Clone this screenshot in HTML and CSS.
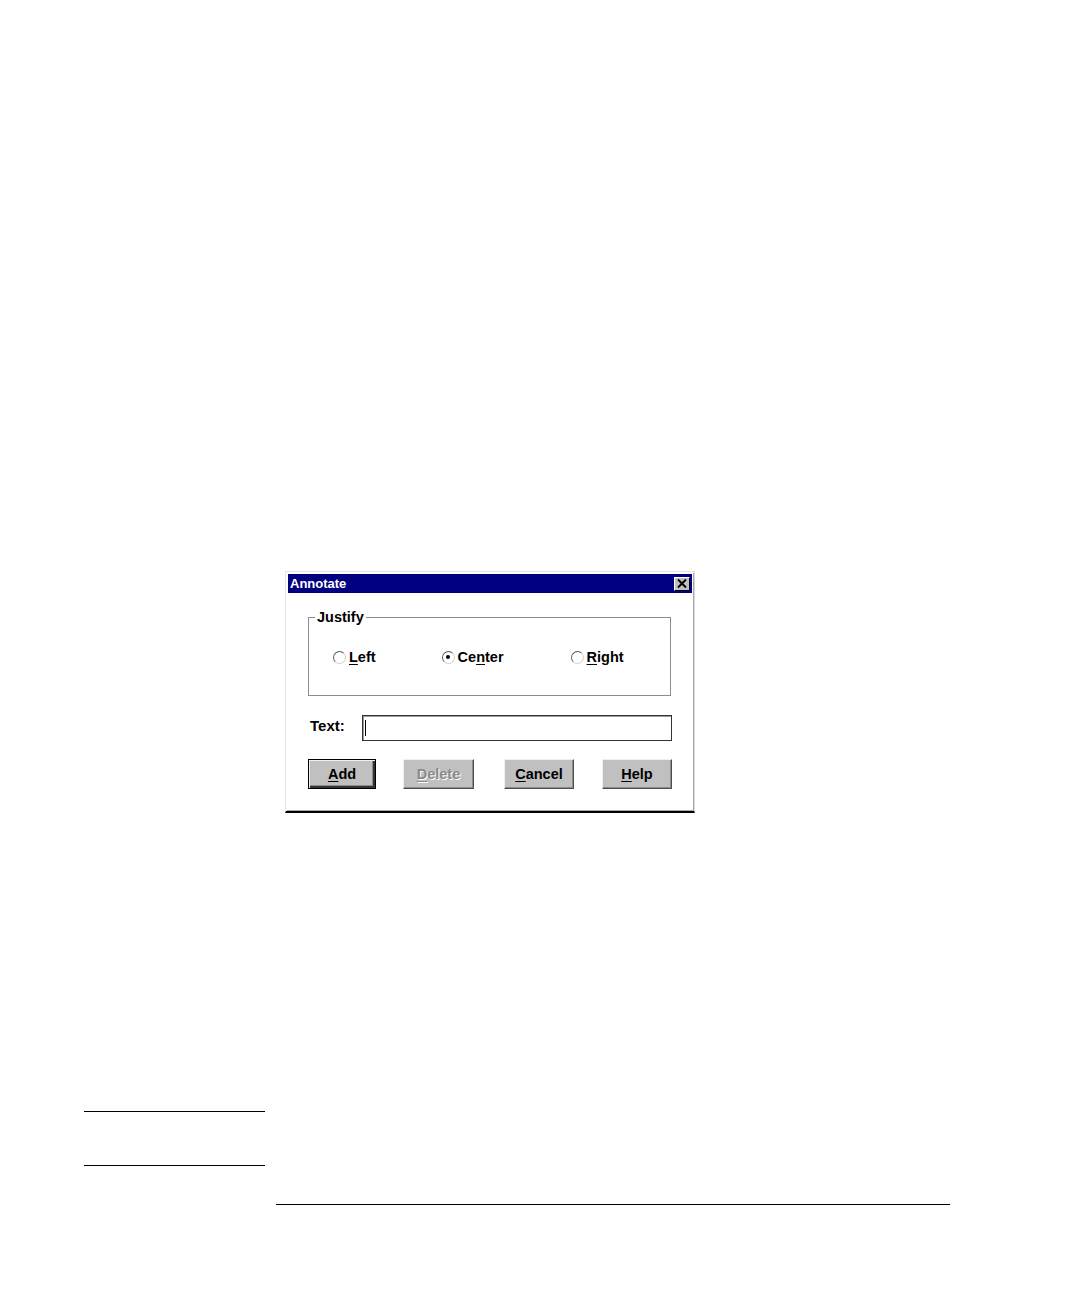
FILE: index.html
```html
<!DOCTYPE html>
<html>
<head>
<meta charset="utf-8">
<link rel="stylesheet" href="styles.css">
</head>
<body>
<div class="page">
  <div class="dialog">
    <div class="titlebar">
      <span class="title">Annotate</span>
      <span class="close">
        <svg width="10" height="9" viewBox="0 0 10 9"><path d="M1 0.5 L9 8.5 M9 0.5 L1 8.5" stroke="#000" stroke-width="2"/></svg>
      </span>
    </div>
    <div class="body">
      <div class="group">
        <span class="legend">Justify</span>
        <div class="radios">
          <label class="radio r-left"><span class="dot"></span><span><u>L</u>eft</span></label>
          <label class="radio r-center"><span class="dot checked"></span><span>Ce<u>n</u>ter</span></label>
          <label class="radio r-right"><span class="dot"></span><span><u>R</u>ight</span></label>
        </div>
      </div>
      <div class="textrow">
        <span class="textlabel">Text:</span>
        <div class="input"><span class="caret"></span></div>
      </div>
      <div class="buttons">
        <div class="btn default b-add"><span><u>A</u>dd</span></div>
        <div class="btn disabled b-delete"><span><u>D</u>elete</span></div>
        <div class="btn b-cancel"><span><u>C</u>ancel</span></div>
        <div class="btn b-help"><span><u>H</u>elp</span></div>
      </div>
    </div>
  </div>
  <div class="rule short first"></div>
  <div class="rule short second"></div>
  <div class="rule long"></div>
</div>
</body>
</html>
```
FILE: styles.css
```css
html, body {
  margin: 0;
  padding: 0;
  background: #fff;
}
.page {
  width: 1080px;
  height: 1298px;
  padding-top: 571px;
  box-sizing: border-box;
  font-family: "Liberation Sans", Arial, sans-serif;
  color: #000;
}
.dialog {
  margin-left: 285px;
  width: 410px;
  height: 242px;
  box-sizing: border-box;
  background: #fff;
  border-top: 1px solid #e4e4e4;
  border-left: 1px solid #e4e4e4;
  border-right: 1px solid #d8d8d8;
  border-bottom: 2px solid #000;
  box-shadow: inset 1px 1px 0 #fff, inset -1px -1px 0 #a8a8a8;
  padding: 2px 2px 0 2px;
}
.titlebar {
  height: 19px;
  background: #000080;
  display: flex;
  align-items: center;
  justify-content: space-between;
  padding: 0 2px 0 2px;
}
.title {
  color: #fff;
  font-weight: bold;
  font-size: 13px;
  line-height: 19px;
}
.close {
  width: 16px;
  height: 14px;
  box-sizing: border-box;
  background: #c0c0c0;
  border-top: 1px solid #fff;
  border-left: 1px solid #fff;
  border-right: 1px solid #000;
  border-bottom: 1px solid #000;
  display: flex;
  align-items: center;
  justify-content: center;
}
.body {
  padding: 24px 0 0 20px;
}
.group {
  position: relative;
  width: 363px;
  height: 79px;
  box-sizing: border-box;
  border: 1px solid #8c8c8c;
}
.legend {
  position: absolute;
  top: -10px;
  left: 6px;
  background: #fff;
  padding: 0 2px 0 2px;
  font-weight: bold;
  font-size: 14.5px;
  line-height: 18px;
}
.radios {
  display: flex;
  padding: 30px 0 0 24px;
}
.radio {
  display: flex;
  align-items: center;
  font-weight: bold;
  font-size: 14.5px;
  line-height: 18px;
}
.r-center { margin-left: 66px; }
.r-right { margin-left: 67px; }
.dot {
  width: 13px;
  height: 13px;
  box-sizing: border-box;
  border-radius: 50%;
  border: 1px solid;
  border-color: #5a5a5a #d0d0d0 #d0d0d0 #5a5a5a;
  margin-right: 3px;
  display: flex;
  align-items: center;
  justify-content: center;
}
.dot.checked::after {
  content: "";
  width: 4px;
  height: 4px;
  border-radius: 50%;
  background: #000;
}
.radio u, .btn u {
  text-underline-offset: 2px;
}
.textrow {
  display: flex;
  align-items: center;
  margin-top: 19px;
}
.textlabel {
  font-weight: bold;
  font-size: 15px;
  line-height: 18px;
  margin-left: 2px;
  padding-bottom: 4px;
  width: 52px;
}
.input {
  width: 310px;
  height: 26px;
  box-sizing: border-box;
  border: 1px solid #333;
  box-shadow: inset 1px 1px 0 #9a9a9a;
  display: flex;
  align-items: center;
  padding-left: 2px;
}
.caret {
  width: 1px;
  height: 16px;
  background: #000;
}
.buttons {
  display: flex;
  margin-top: 18px;
}
.btn {
  height: 30px;
  box-sizing: border-box;
  background: #c0c0c0;
  border-top: 1px solid #f0f0f0;
  border-left: 1px solid #f0f0f0;
  border-right: 1px solid #505050;
  border-bottom: 1px solid #505050;
  box-shadow: inset -1px -1px 0 #8a8a8a;
  display: flex;
  align-items: center;
  justify-content: center;
  font-weight: bold;
  font-size: 14.5px;
}
.btn.default {
  border: 1px solid #000;
  box-shadow: inset 1px 1px 0 #f0f0f0, inset -2px -2px 0 #333, inset -3px -3px 0 #8a8a8a;
}
.btn.disabled {
  color: #8a8a8a;
  text-shadow: 1px 1px 0 #fff;
}
.b-add { width: 68px; }
.b-delete { width: 71px; margin-left: 27px; }
.b-cancel { width: 70px; margin-left: 30px; }
.b-help { width: 70px; margin-left: 28px; }
.rule {
  height: 1px;
  background: #000;
}
.rule.short {
  width: 181px;
  margin-left: 84px;
}
.rule.first { margin-top: 298px; }
.rule.second { margin-top: 53px; }
.rule.long {
  width: 674px;
  margin-left: 276px;
  margin-top: 38px;
}
```
